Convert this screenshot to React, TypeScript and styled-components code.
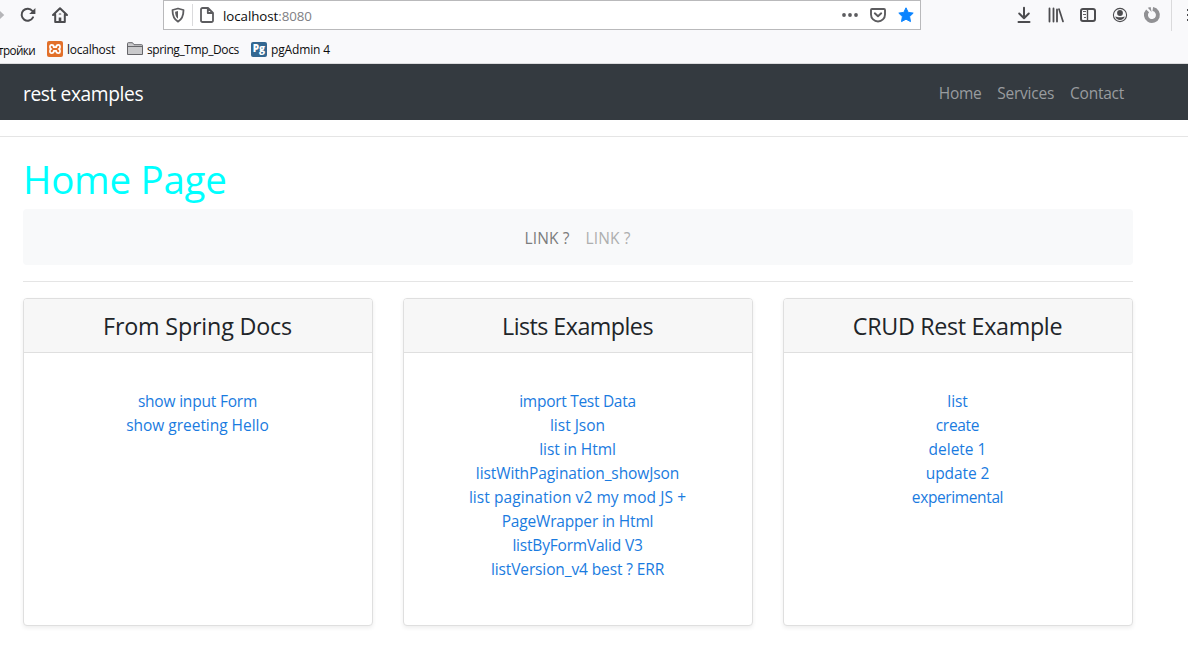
import React from "react";
import styled, { createGlobalStyle } from "styled-components";

const GlobalStyle = createGlobalStyle`
  *, *::before, *::after { box-sizing: border-box; }
  html, body { margin: 0; padding: 0; background: #fff; }
  body { overflow: hidden; font-family: "Open Sans", "Noto Sans", sans-serif; font-size: 15.5px; line-height: 24px; color: #212529; }
  a { text-decoration: none; }
`;

const Page = styled.div`
  width: 1188px;
  height: 653px;
  overflow: hidden;
`;

const Browser = styled.header`
  height: 64px;
  background: #f9f9fb;
  border-bottom: 1px solid #dcdcde;
  color: #0c0c0d;
`;

const Toolbar = styled.div`
  display: flex;
  align-items: center;
  height: 30px;
`;

const IconGroup = styled.div<{ $gap: number; $left: number; $width?: number }>`
  display: flex;
  flex: none;
  align-items: center;
  gap: ${(p) => p.$gap}px;
  margin-left: ${(p) => p.$left}px;
  width: ${(p) => (p.$width ? `${p.$width}px` : "auto")};
`;

const AddressBar = styled.div`
  display: flex;
  flex: none;
  align-items: center;
  width: 758px;
  height: 30px;
  padding: 0 6px;
  background: #fff;
  border: 1px solid #b9b9bb;
`;

const Divider = styled.span<{ $height: number }>`
  flex: none;
  width: 1px;
  height: ${(p) => p.$height}px;
  margin: 0 6px;
  background: #dadadc;
`;

const Address = styled.span`
  flex: 1;
  margin-left: 8px;
  padding-top: 1px;
  font-size: 13.3px;
  line-height: 20px;
  letter-spacing: -0.05px;
`;

const Port = styled.span`
  color: #808084;
`;

const Icon = styled.svg`
  flex: none;
  display: block;
  width: 16px;
  height: 16px;
  overflow: visible;
`;

const Bookmarks = styled.nav`
  display: flex;
  align-items: center;
  height: 33px;
  padding-top: 5px;
  font-size: 12px;
  line-height: 16px;
  white-space: nowrap;
`;

const Bookmark = styled.a<{ $width: number; $track: number }>`
  display: flex;
  flex: none;
  align-items: center;
  gap: 4px;
  width: ${(p) => p.$width}px;
  letter-spacing: ${(p) => p.$track}px;
  color: #0c0c0d;
`;

const BookmarkLabel = styled.span`
  padding-top: 1px;
`;

const CutBookmark = styled(Bookmark)`
  justify-content: flex-end;
  padding-right: 12px;
  font-size: 11.7px;
`;

const PgBadge = styled.span`
  flex: none;
  width: 16px;
  height: 15px;
  border-radius: 2px;
  background: #336791;
  color: #fff;
  font: 800 10px/12px "Open Sans", sans-serif;
  letter-spacing: 0;
  text-align: center;
`;

const Navbar = styled.nav`
  display: flex;
  align-items: center;
  justify-content: space-between;
  height: 56px;
  padding: 0 64px 0 23px;
  background: #343a40;
`;

const Brand = styled.a`
  padding-top: 4px;
  font-size: 19.2px;
  line-height: 30px;
  letter-spacing: -0.4px;
  color: #fff;
`;

const NavLinks = styled.div`
  display: flex;
  gap: 16px;
  padding-top: 1px;
`;

const NavLink = styled.a<{ $track: number }>`
  letter-spacing: ${(p) => p.$track}px;
  color: #999c9f;
`;

const Rule = styled.hr`
  height: 1px;
  margin: 16px 0;
  border: 0;
  background: #e5e5e5;
`;

const Container = styled.main`
  width: 1110px;
  margin-left: 23px;
`;

const Title = styled.h1`
  margin: 0 0 8px;
  padding-top: 2px;
  height: 48px;
  font-size: 38.5px;
  font-weight: 400;
  line-height: 48px;
  letter-spacing: -0.25px;
  color: #00ffff;
`;

const LinkBar = styled.div`
  display: flex;
  justify-content: center;
  gap: 16px;
  height: 56px;
  padding: 17px 1px 0 0;
  border-radius: 4px;
  background: #f8f9fa;
`;

const BarLink = styled.a<{ $muted?: boolean }>`
  letter-spacing: 0.12px;
  color: ${(p) => (p.$muted ? "#aeafaf" : "#7c7d7d")};
`;

const Deck = styled.div`
  display: grid;
  grid-template-columns: repeat(3, 350px);
  gap: 30px;
`;

const Card = styled.section`
  height: 328px;
  border: 1px solid #dfdfdf;
  border-radius: 4px;
  background: #fff;
  box-shadow: 0 2px 4px rgba(0, 0, 0, 0.07);
  text-align: center;
`;

const CardTitle = styled.h4<{ $track: number }>`
  margin: 0;
  height: 54px;
  padding: 12px 1px 0 0;
  border-bottom: 1px solid #dfdfdf;
  border-radius: 3px 3px 0 0;
  background: #f7f7f7;
  font-size: 23.3px;
  font-weight: 400;
  line-height: 30px;
  letter-spacing: ${(p) => p.$track}px;
`;

const LinkList = styled.div`
  display: flex;
  flex-direction: column;
  align-items: center;
  padding: 36px 1px 0 0;
`;

const CardLink = styled.a<{ $track: number }>`
  letter-spacing: ${(p) => p.$track}px;
  white-space: nowrap;
  color: #1a7be0;
`;

type Item = [text: string, track: number];

const cards: { title: string; track: number; links: Item[] }[] = [
  {
    title: "From Spring Docs",
    track: -0.18,
    links: [["show input Form", -0.2], ["show greeting Hello", -0.03]],
  },
  {
    title: "Lists Examples",
    track: -0.55,
    links: [
      ["import Test Data", -0.29],
      ["list Json", 0],
      ["list in Html", -0.07],
      ["listWithPagination_showJson", -0.1],
      ["list pagination v2 my mod JS +", 0.07],
      ["PageWrapper in Html", -0.18],
      ["listByFormValid V3", -0.2],
      ["listVersion_v4 best ? ERR", -0.12],
    ],
  },
  {
    title: "CRUD Rest Example",
    track: -0.32,
    links: [["list", -0.1], ["create", -0.3], ["delete 1", 0], ["update 2", -0.1], ["experimental", -0.38]],
  },
];

const dark = "#4c4c4f";

const ForwardIcon = () => (
  <Icon viewBox="0 0 16 16"><path d="M10 3.5 14.8 8 10 12.5M14 8H1" fill="none" stroke="#b5b5b8" strokeWidth="2" /></Icon>
);
const ReloadIcon = () => (
  <Icon viewBox="0 0 16 16">
    <path d="M13 10.4A6 6 0 1 1 12.4 4" fill="none" stroke={dark} strokeWidth="2" strokeLinecap="round" />
    <path d="M15.4 1v6H9.2z" fill={dark} />
  </Icon>
);
const HomeIcon = () => (
  <Icon viewBox="0 0 16 16" fill="none" stroke={dark} strokeWidth="2" strokeLinecap="round" strokeLinejoin="round">
    <path d="M1 8 8 1.200 15 8M3.200 7.500V15h9.600V7.500" />
    <path d="M8 14.500v-4" strokeWidth="2.600" strokeLinecap="butt" />
    <path d="M7.300 7h1.400" strokeWidth="1.200" />
  </Icon>
);
const ShieldIcon = () => (
  <Icon viewBox="0 0 16 16">
    <path d="M8 1.500 13.500 3c0 5.200-.8 9-5.500 11.600C3.300 12 2.500 8.200 2.500 3z" fill="none" stroke="#5c5c5f" strokeWidth="1.800" strokeLinejoin="round" />
    <path d="M8 4v7.700C5.900 10.200 5.200 8 5.100 4.700z" fill="#5c5c5f" />
  </Icon>
);
const PageIcon = () => (
  <Icon viewBox="0 0 16 16" fill="none" stroke="#5c5c5f" strokeWidth="1.800" strokeLinejoin="round">
    <path d="M3.500 1H9l5 5v7.500a1.500 1.500 0 0 1-1.500 1.500h-9A1.500 1.500 0 0 1 2 13.500v-11A1.500 1.500 0 0 1 3.500 1zM8.800 1.200V6H14" />
  </Icon>
);
const DotsIcon = () => (
  <Icon viewBox="0 0 16 16" fill="#5c5c5f"><circle cx="2" cy="8" r="1.900" /><circle cx="8" cy="8" r="1.900" /><circle cx="14" cy="8" r="1.900" /></Icon>
);
const PocketIcon = () => (
  <Icon viewBox="0 0 16 16" fill="none" stroke="#5c5c5f" strokeWidth="1.900" strokeLinecap="round" strokeLinejoin="round">
    <path d="M2 2h12a1 1 0 0 1 1 1v4.500a7 7 0 0 1-14 0V3a1 1 0 0 1 1-1z" /><path d="M4.800 6.300 8 9.300l3.200-3" />
  </Icon>
);
const StarIcon = () => (
  <Icon viewBox="0 0 16 16"><path d="M8 .8 10.200 5.400l5 .7-3.600 3.500.9 5L8 12.200l-4.500 2.400.9-5L.8 6.100l5-.7z" fill="#0a84ff" stroke="#0a84ff" strokeLinejoin="round" /></Icon>
);
const DownloadIcon = () => (
  <Icon viewBox="0 0 16 16" fill="none" stroke={dark} strokeWidth="2" strokeLinecap="round" strokeLinejoin="round"><path d="M8 .8v10M3.200 6.500 8 11.200l4.800-4.700M2.500 15h11" /></Icon>
);
const LibraryIcon = () => (
  <Icon viewBox="0 0 16 16" fill="none" stroke={dark} strokeLinecap="round"><path d="M1.500 1.500v13M5.500 1.500v13M9 2.500v12" strokeWidth="1.800" /><path d="m11 2 4 12.500" strokeWidth="1.700" /></Icon>
);
const SidebarIcon = () => (
  <Icon viewBox="0 0 16 16" fill="none" stroke={dark}><rect x="1" y="2" width="14" height="12" rx="2" strokeWidth="2" /><path d="M7.500 2v12" strokeWidth="1.400" /><path d="M3 4.500h3M3 7.500h3M4 10.500h2" strokeWidth=".9" /></Icon>
);
const AccountIcon = () => (
  <Icon viewBox="0 0 16 16"><circle cx="8" cy="8" r="6.600" fill="none" stroke={dark} strokeWidth="1.100" /><circle cx="8" cy="6" r="2.900" fill={dark} /><path d="M3.200 9.500c1.500.2 2 .8 4.800.8s3.300-.6 4.800-.8a5.100 5.100 0 0 1-9.600 0z" fill={dark} /></Icon>
);
const RingIcon = () => (
  <Icon viewBox="0 0 16 16"><path d="M8.800 2.100A6 6 0 1 1 3.600 3.900" fill="none" stroke="#919194" strokeWidth="4" /><path d="M3.800.8 6.600.1 7.600 5z" fill="#919194" /></Icon>
);
const MenuIcon = () => (
  <Icon viewBox="0 0 16 16" stroke={dark} strokeWidth="2"><path d="M1 3h14M1 8h14M1 13h14" /></Icon>
);
const XamppIcon = () => (
  <Icon viewBox="0 0 16 16">
    <rect width="16" height="16" rx="2" fill="#e2702a" />
    <path d="M4.400 8A1.500 1.500 0 0 1 3 6.500V5.300A1.500 1.500 0 0 1 4.500 3.800c1.800 0 2.300.8 2.300 2.400h2.400c0-1.600.5-2.400 2.300-2.400A1.500 1.500 0 0 1 13 5.300v1.200A1.500 1.500 0 0 1 11.600 8 1.500 1.500 0 0 1 13 9.500v1.200a1.500 1.500 0 0 1-1.500 1.500c-1.800 0-2.300-.8-2.300-2.400H6.800c0 1.600-.5 2.400-2.300 2.400A1.500 1.500 0 0 1 3 10.700V9.500A1.500 1.500 0 0 1 4.400 8z" fill="none" stroke="#fff" strokeWidth="1.700" strokeLinejoin="round" />
  </Icon>
);
const FolderIcon = () => (
  <Icon viewBox="0 0 16 16"><path d="M.5 13.500v-11a.8.8 0 0 1 .8-.8h4.200l1.500 2h7.700a.8.8 0 0 1 .8.8v9z" fill="#c9c9cb" stroke="#66666a" /><path d="M1 5.500h14" stroke="#66666a" /></Icon>
);

export default function App() {
  return (
    <Page>
      <GlobalStyle />
      <Browser>
        <Toolbar>
          <IconGroup $gap={16} $left={-12} $width={175}>
            <ForwardIcon /><ReloadIcon /><HomeIcon />
          </IconGroup>
          <AddressBar>
            <ShieldIcon />
            <Divider $height={22} />
            <PageIcon />
            <Address>localhost<Port>:8080</Port></Address>
            <IconGroup $gap={12} $left={0}><DotsIcon /><PocketIcon /><StarIcon /></IconGroup>
          </AddressBar>
          <IconGroup $gap={16} $left={95}>
            <DownloadIcon /><LibraryIcon /><SidebarIcon /><AccountIcon /><RingIcon />
          </IconGroup>
          <IconGroup $gap={8} $left={5}><Divider $height={32} /><MenuIcon /></IconGroup>
        </Toolbar>
        <Bookmarks>
          <CutBookmark $width={47} $track={-0.6}><BookmarkLabel>Настройки</BookmarkLabel></CutBookmark>
          <Bookmark $width={80} $track={-0.25}><XamppIcon /><BookmarkLabel>localhost</BookmarkLabel></Bookmark>
          <Bookmark $width={124} $track={-0.4}><FolderIcon /><BookmarkLabel>spring_Tmp_Docs</BookmarkLabel></Bookmark>
          <Bookmark $width={90} $track={-0.15}><PgBadge>Pg</PgBadge><BookmarkLabel>pgAdmin 4</BookmarkLabel></Bookmark>
        </Bookmarks>
      </Browser>
      <Navbar>
        <Brand>rest examples</Brand>
        <NavLinks>
          <NavLink $track={-0.35}>Home</NavLink>
          <NavLink $track={-0.24}>Services</NavLink>
          <NavLink $track={-0.25}>Contact</NavLink>
        </NavLinks>
      </Navbar>
      <Rule />
      <Container>
        <Title>Home Page</Title>
        <LinkBar>
          <BarLink>LINK ?</BarLink>
          <BarLink $muted>LINK ?</BarLink>
        </LinkBar>
        <Rule />
        <Deck>
          {cards.map((card) => (
            <Card key={card.title}>
              <CardTitle $track={card.track}>{card.title}</CardTitle>
              <LinkList>
                {card.links.map(([text, track]) => (
                  <CardLink key={text} $track={track}>{text}</CardLink>
                ))}
              </LinkList>
            </Card>
          ))}
        </Deck>
      </Container>
    </Page>
  );
}
